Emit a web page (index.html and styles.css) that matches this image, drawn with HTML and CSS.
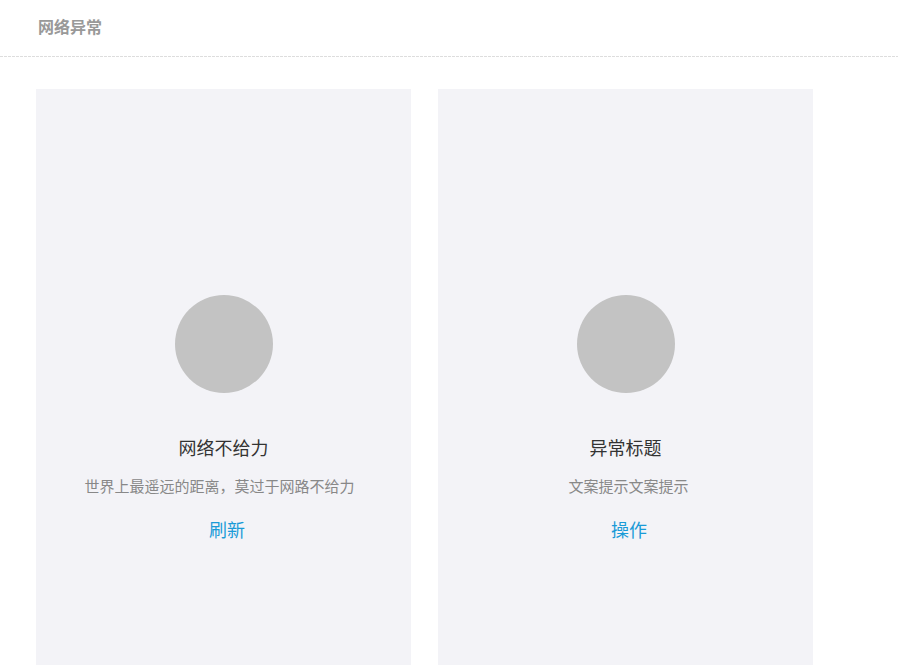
FILE: index.html
```html
<!DOCTYPE html>
<html lang="zh-CN">
<head>
<meta charset="utf-8">
<title>网络异常</title>
<link rel="stylesheet" href="styles.css">
</head>
<body>
<header class="page-header">
  <h1 class="page-title">网络异常</h1>
</header>
<div class="dash"></div>
<main class="cards">
  <section class="card">
    <div class="placeholder"></div>
    <h2 class="card-title">网络不给力</h2>
    <p class="card-desc card-desc-long">世界上最遥远的距离，莫过于网路不给力</p>
    <a class="card-action" href="#">刷新</a>
  </section>
  <section class="card">
    <div class="placeholder"></div>
    <h2 class="card-title">异常标题</h2>
    <p class="card-desc">文案提示文案提示</p>
    <a class="card-action" href="#">操作</a>
  </section>
</main>
</body>
</html>
```

FILE: styles.css
```css
html, body {
  margin: 0;
  padding: 0;
  background: #ffffff;
  font-family: "Noto Sans CJK SC", "Noto Sans", "Liberation Sans", sans-serif;
  overflow: hidden;
}

.page-header {
  box-sizing: border-box;
  height: 56px;
  padding: 16px 38px 0;
}

.page-title {
  margin: 0;
  font-size: 16px;
  line-height: 20px;
  font-weight: bold;
  color: #999999;
}

.dash {
  height: 1px;
  background: repeating-linear-gradient(to right, #dddddd 0 3px, transparent 3px 4px);
}

.cards {
  display: flex;
  gap: 27px;
  padding: 32px 0 0 36px;
}

.card {
  box-sizing: border-box;
  width: 375px;
  height: 667px;
  flex: none;
  background: #f3f3f7;
  display: flex;
  flex-direction: column;
  align-items: center;
  padding-top: 206px;
}

.placeholder {
  width: 98px;
  height: 98px;
  border-radius: 50%;
  background: #c3c3c3;
}

.card-title {
  margin: 42px 0 0;
  font-size: 18px;
  line-height: 24px;
  font-weight: normal;
  color: #333333;
}

.card-desc {
  margin: 17px 0 0;
  font-size: 15px;
  line-height: 20px;
  color: #888888;
  padding-left: 6px;
}

.card-desc-long {
  padding-left: 0;
  padding-right: 8px;
}

.card-action {
  margin-top: 21px;
  padding-left: 7px;
  font-size: 18px;
  line-height: 24px;
  color: #1a9bd7;
  text-decoration: none;
}
```
